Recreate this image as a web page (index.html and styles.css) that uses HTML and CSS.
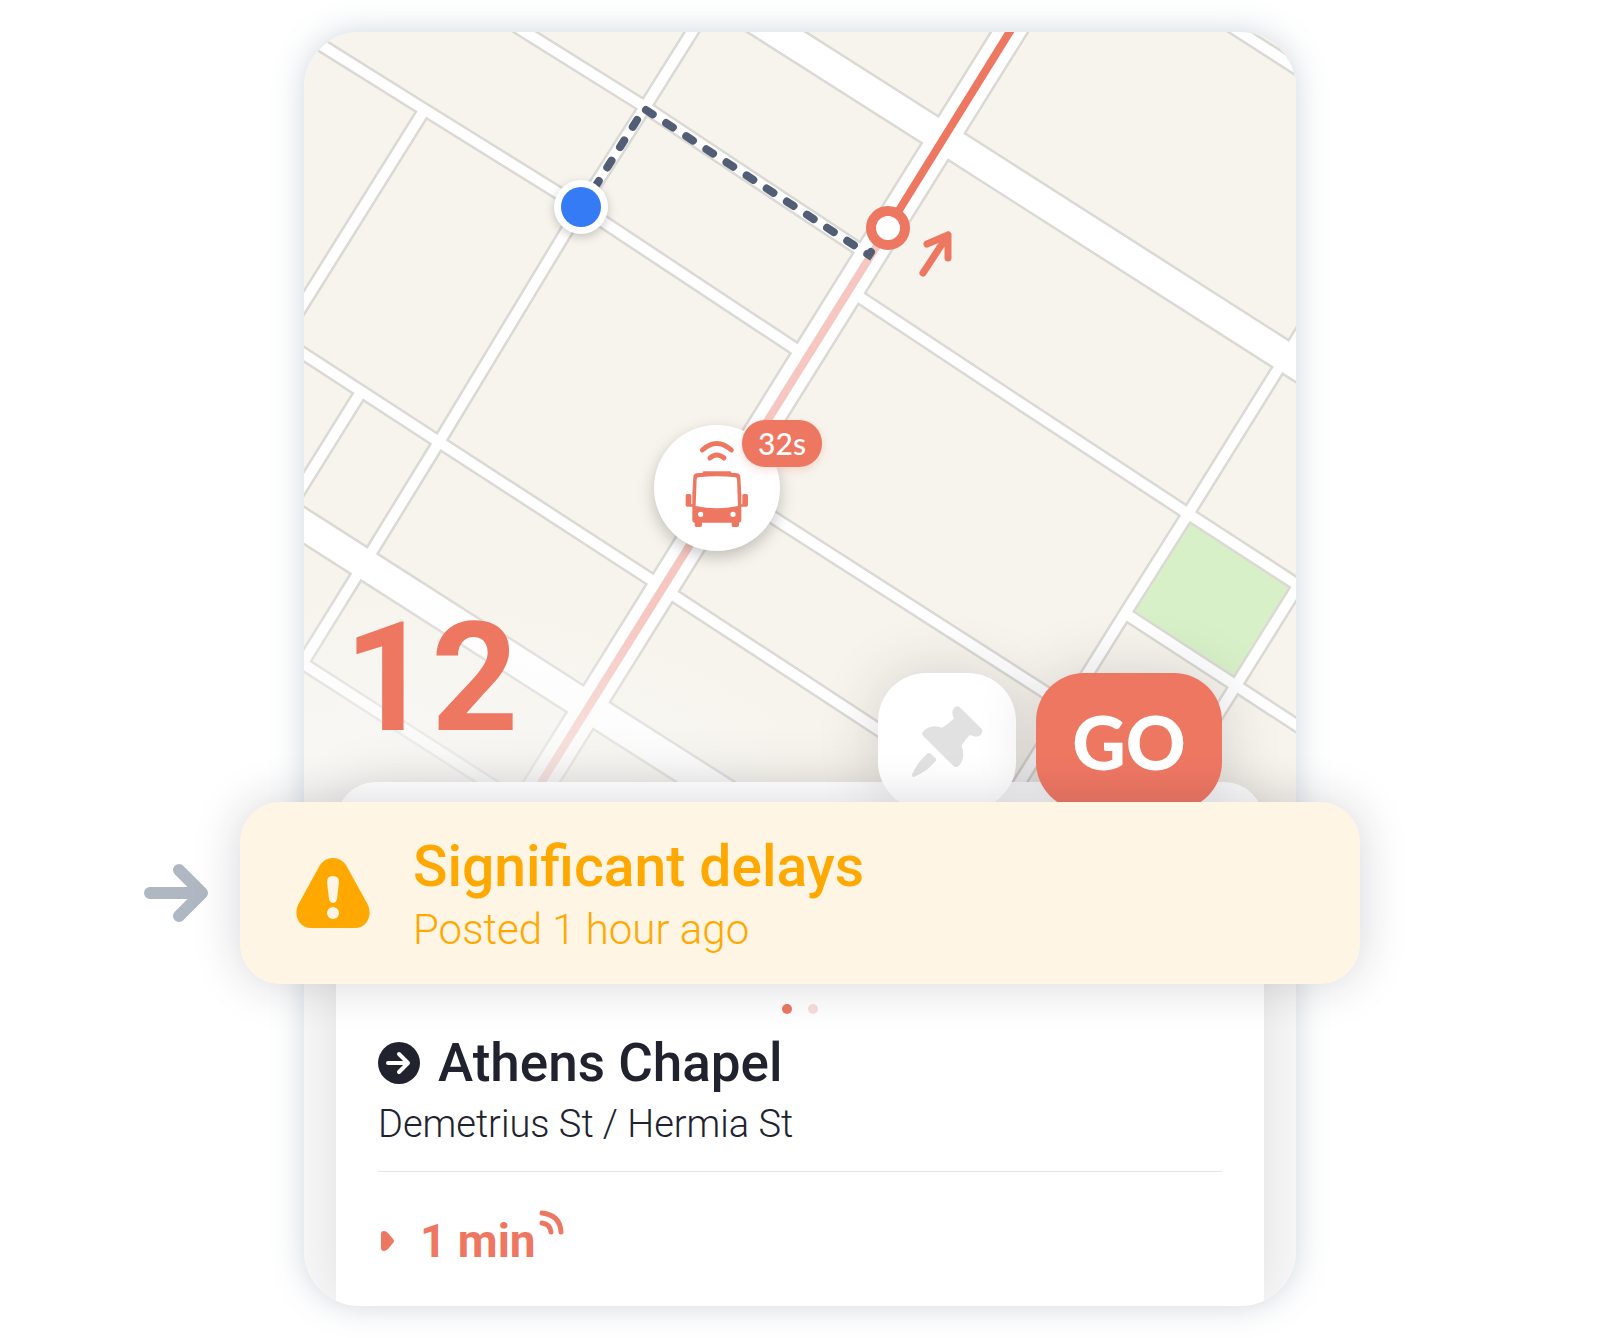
FILE: index.html
```html
<!DOCTYPE html>
<html lang="en">
<head>
  <meta charset="utf-8">
  <meta name="viewport" content="width=device-width, initial-scale=1">
  <title>Line 12</title>
  <link rel="stylesheet" href="styles.css">
</head>
<body>
<main class="stage">
  <div class="phone">
    <svg class="map" viewBox="304 32 992 800" preserveAspectRatio="xMidYMin slice" role="img" aria-label="Map">
      <defs>
        <radialGradient id="fade" cx="380" cy="840" r="260" gradientUnits="userSpaceOnUse" gradientTransform="translate(380 840) scale(2 1) translate(-380 -840)">
          <stop offset="0" stop-color="#f9f9f8" stop-opacity=".85"/>
          <stop offset=".4" stop-color="#f9f9f8" stop-opacity=".6"/>
          <stop offset="1" stop-color="#f9f9f8" stop-opacity="0"/>
        </radialGradient>
        <g id="small-roads">
          <path d="M500 16L525 32L645 107L865 253"/>
          <path d="M290 26L321 45L425 110L581 207L800 352"/>
          <path d="M290 345L439 442L650 579L676 597L876 728L960 783"/>
          <path d="M855 294L1015 400L1190 515L1310 593"/>
          <path d="M720 482L780 522L1045 692L1100 727"/>
          <path d="M1126 614L1235 685L1310 734"/>
          <path d="M1215 16L1240 32L1310 77"/>
          <path d="M302 663L487 782L550 822"/>
          <path d="M425 109L290 325"/>
          <path d="M702 16L645 107L581 207L439 442L372 551L302 664"/>
          <path d="M361 392L290 506"/>
          <path d="M1315 309L1277 371L1188 514L1126 612L1020 782L1000 814"/>
          <path d="M1310 567L1235 687L1170 790"/>
        </g>
        <g id="large-roads">
          <path d="M745 12L943 138L1320 379"/>
          <path d="M280 510L588 707L770 823"/>
          <path d="M1022 12L521 815"/>
        </g>
      </defs>
      <rect class="land" x="304" y="32" width="992" height="800"/>
      <path class="park" d="M1188 518L1294 588L1236 682L1129 612Z"/>
      <use href="#small-roads" class="edge edge-small"/>
      <use href="#large-roads" class="edge edge-large"/>
      <use href="#small-roads" class="road road-small"/>
      <use href="#large-roads" class="road road-large"/>

      <path class="route route-past" d="M888 228L521 815"/>
      <path class="route" d="M1022 12L888 228"/>
      <rect x="304" y="560" width="700" height="272" fill="url(#fade)"/>

      <path class="walk" d="M637 120L590 195"/>
      <path class="walk" d="M646 110L869 255L871 252"/>

      <circle class="knob" cx="581" cy="207" r="27"/>
      <circle class="me" cx="581" cy="207" r="20"/>
      <circle class="stop" cx="888" cy="228" r="17"/>
      <path class="heading" d="M923 273L948 235M927 244L948 235V258"/>

      <!-- vehicle -->
      <circle class="knob knob-bus" cx="717" cy="488" r="63"/>
      <g transform="translate(640 410) scale(.3333)">
        <path class="bus-wave" d="M187 120Q230 81 274 120M210 144Q230 126 252 144"/>
        <path class="bus" fill-rule="evenodd" d="M188 188Q188 184 193 184H269Q274 184 274 188L291 190Q300 191 301 201L304 253V283H307V257Q307 252 312 252H319Q324 252 324 257V285Q324 290 319 290H304V331Q304 338 297 338V346Q297 351 292 351H280Q275 351 275 346V338H186V346Q186 351 181 351H169Q164 351 164 346V338Q157 338 157 331V290H142Q137 290 137 285V257Q137 252 142 252H149Q154 252 154 257V283H157V253L160 201Q161 191 171 190ZM175 202Q170 202 170 207L167 288Q200 295 231 295Q262 295 294 288L291 207Q291 202 286 202Q230 196 175 202ZM182 305A8 8 0 1 0 182 321A8 8 0 1 0 182 305ZM279 305A8 8 0 1 0 279 321A8 8 0 1 0 279 305Z"/>
      </g>
      <rect class="eta" x="742" y="420" width="80" height="47" rx="23"/>
      <text class="eta-text" x="782" y="455">32s</text>
    </svg>

    <div class="map-bar">
      <h1 class="line-number">12</h1>
      <div class="actions">
        <button class="btn btn-pin" type="button" aria-label="Pin">
          <svg width="76" height="76" viewBox="150 190 230 230">
            <path d="M281 215Q283 200 295 197Q301 197 305 201L369 264Q374 270 371 276Q366 289 352 289L334 284Q320 297 309 316Q315 330 314 346Q313 368 298 379Q290 383 284 377L192 286Q187 279 193 273Q207 258 226 257Q240 257 249 262Q268 252 286 234Q281 225 281 215Z"/>
            <path d="M206 340Q211 336 216 341L231 355Q234 359 230 363L212 382Q200 393 165 411Q157 411 160 402Q172 375 190 355Z"/>
          </svg>
        </button>
        <button class="btn btn-go" type="button">GO</button>
      </div>
    </div>

    <section class="sheet">
      <div class="dots"><span class="dot active"></span><span class="dot"></span></div>
      <h2 class="stop-name">
        <svg width="42" height="42" viewBox="0 0 42 42" aria-hidden="true">
          <circle cx="21" cy="21" r="21"/>
          <path d="M10 21H30M21 12L30 21L21 30"/>
        </svg>
        Athens Chapel
      </h2>
      <p class="stop-streets">Demetrius St / Hermia St</p>
      <div class="departure">
        <svg class="play" width="16" height="20" viewBox="0 0 16 20" aria-hidden="true"><path d="M3 3Q3 0 6 0Q8 0 10 2L15 8Q17 10 15 12L10 18Q8 20 6 20Q3 20 3 17Z"/></svg>
        <span>1 min</span>
        <svg class="live" width="25" height="25" viewBox="0 0 25 25" aria-hidden="true"><path d="M3 3Q21 5 22 22M3 13Q11 14 12 22"/></svg>
      </div>
    </section>
  </div>

  <div class="callout">
    <svg class="callout-arrow" width="64" height="58" viewBox="0 0 64 58" aria-hidden="true"><path d="M6 29H56M35 6L58 29L35 52"/></svg>
    <div class="alert" role="status">
      <svg width="74" height="70" viewBox="0 0 74 70" aria-hidden="true">
        <path class="alert-shape" d="M37 0Q45 0 50 7L72 47Q76 57 70 65Q66 70 59 70H15Q8 70 4 65Q-2 57 2 47L24 7Q29 0 37 0Z"/>
        <path class="alert-mark" d="M31 24Q31 18 37 18Q43 18 43 24L41 41Q40 45 37 45Q34 45 33 41Z"/>
        <circle class="alert-mark" cx="37" cy="55" r="6"/>
      </svg>
      <div>
        <p class="alert-title">Significant delays</p>
        <p class="alert-time">Posted 1 hour ago</p>
      </div>
    </div>
  </div>
</main>
</body>
</html>
```

FILE: styles.css
```css
* { box-sizing: border-box; }

body {
  margin: 0;
  background: #fff;
  color: #20222e;
  font-family: Roboto, "Liberation Sans", sans-serif;
}

h1, h2, p { margin: 0; }

.stage {
  position: relative;
  width: 62%;
  min-width: 700px;
  margin: 32px auto;
}

.phone {
  position: relative;
  overflow: hidden;
  padding-top: 588px;
  border-radius: 56px;
  background: #f9f9f9;
}
.stage::before {
  content: "";
  position: absolute;
  inset: 0;
  border-radius: 56px;
  box-shadow: 0 0 32px rgba(70, 100, 125, 0.26);
}

/* map */
.map { position: absolute; top: 0; left: 0; width: 100%; height: 800px; }
.land { fill: #f7f4ed; }
.park { fill: #d8f0c7; }
.edge, .road { fill: none; }
.edge { stroke: #dbd9d4; }
.road { stroke: #fff; }
.edge-small { stroke-width: 15px; }
.road-small { stroke-width: 10px; }
.edge-large { stroke-width: 34px; }
.road-large { stroke-width: 29px; }
.route { fill: none; stroke: #ee7762; stroke-width: 8px; }
.route-past { stroke: #f6c7c0; }
.walk { fill: none; stroke: #525e75; stroke-width: 8px; stroke-linecap: round; stroke-dasharray: 8 16; }
.knob { fill: #fff; filter: drop-shadow(0 3px 5px rgba(0, 0, 0, 0.2)); }
.knob-bus { filter: drop-shadow(0 6px 8px rgba(0, 0, 0, 0.22)); }
.me { fill: #357bf6; }
.stop { fill: #fff; stroke: #ee7762; stroke-width: 10px; }
.heading { fill: none; stroke: #ee7762; stroke-width: 7px; stroke-linecap: round; stroke-linejoin: round; }
.bus { fill: #ee7762; }
.bus-wave { fill: none; stroke: #ee7762; stroke-width: 15px; stroke-linecap: round; }
.eta { fill: #ee7762; filter: drop-shadow(0 3px 4px rgba(238, 119, 98, 0.25)); }
.eta-text { fill: #fff; font: 500 30px Lato, sans-serif; text-anchor: middle; }

/* line number and buttons, over the map */
.map-bar {
  position: relative;
  z-index: 2;
  display: flex;
  justify-content: space-between;
  height: 190px;
  padding: 0 74px 0 40px;
}
.line-number { color: #ee7762; font-size: 152px; font-weight: 700; line-height: 116px; }
.actions { display: flex; align-items: flex-end; gap: 20px; }
.btn {
  height: 137px;
  padding: 0;
  border: 0;
  border-radius: 48px;
  box-shadow: 0 0 60px rgba(40, 30, 50, 0.17);
}
.btn-pin { display: grid; place-items: center; width: 138px; background: #fff; }
.btn-pin svg { fill: #e1e1e1; }
.btn-go { width: 186px; background: #ee7762; color: #fff; font: 900 74px Lato, sans-serif; }

/* bottom sheet */
.sheet {
  position: relative;
  margin: -28px 32px 0;
  padding: 222px 42px 38px;
  border-radius: 40px 40px 0 0;
  background: #fff;
  box-shadow: 0 0 60px rgba(0, 0, 0, 0.11);
}
.dots { display: flex; justify-content: center; gap: 16px; margin-bottom: 19px; }
.dot { width: 10px; height: 10px; border-radius: 50%; background: #f8dfdc; }
.dot.active { background: #ee7762; }
.stop-name {
  display: flex;
  align-items: center;
  gap: 18px;
  font-size: 53px;
  font-weight: 500;
  line-height: 60px;
}
.stop-name circle { fill: #20222e; }
.stop-name path { fill: none; stroke: #fff; stroke-width: 4px; stroke-linecap: round; stroke-linejoin: round; }
.stop-streets {
  padding: 9px 0 25px;
  border-bottom: 1px solid #e6e6e6;
  font-size: 38px;
  font-weight: 300;
  line-height: 44px;
}
.departure {
  display: flex;
  align-items: center;
  margin-top: 42px;
  color: #ee7762;
  font-size: 46px;
  font-weight: 700;
  line-height: 54px;
}
.play { margin-right: 26px; fill: #ee7762; }
.live { align-self: flex-start; margin: -4px 0 0 3px; fill: none; stroke: #ee7762; stroke-width: 5px; stroke-linecap: round; }

/* alert pulled out over the sheet */
.callout {
  position: absolute;
  z-index: 3;
  top: 770px;
  left: -160px;
  right: -64px;
  display: flex;
  align-items: center;
  gap: 32px;
}
.callout-arrow { fill: none; stroke: #aeb7c2; stroke-width: 12px; stroke-linecap: round; stroke-linejoin: round; }
.alert {
  flex: 1;
  display: flex;
  align-items: center;
  gap: 43px;
  padding: 28px 56px;
  border-radius: 40px;
  background: #fff5e4;
  box-shadow: 0 0 48px rgba(30, 30, 50, 0.18);
  color: #ffa800;
}
.alert-shape { fill: #ffa800; }
.alert-mark { fill: #fff5e4; }
.alert-title { font-size: 57px; font-weight: 500; line-height: 74px; }
.alert-time { font-size: 42px; font-weight: 300; line-height: 52px; }
```
